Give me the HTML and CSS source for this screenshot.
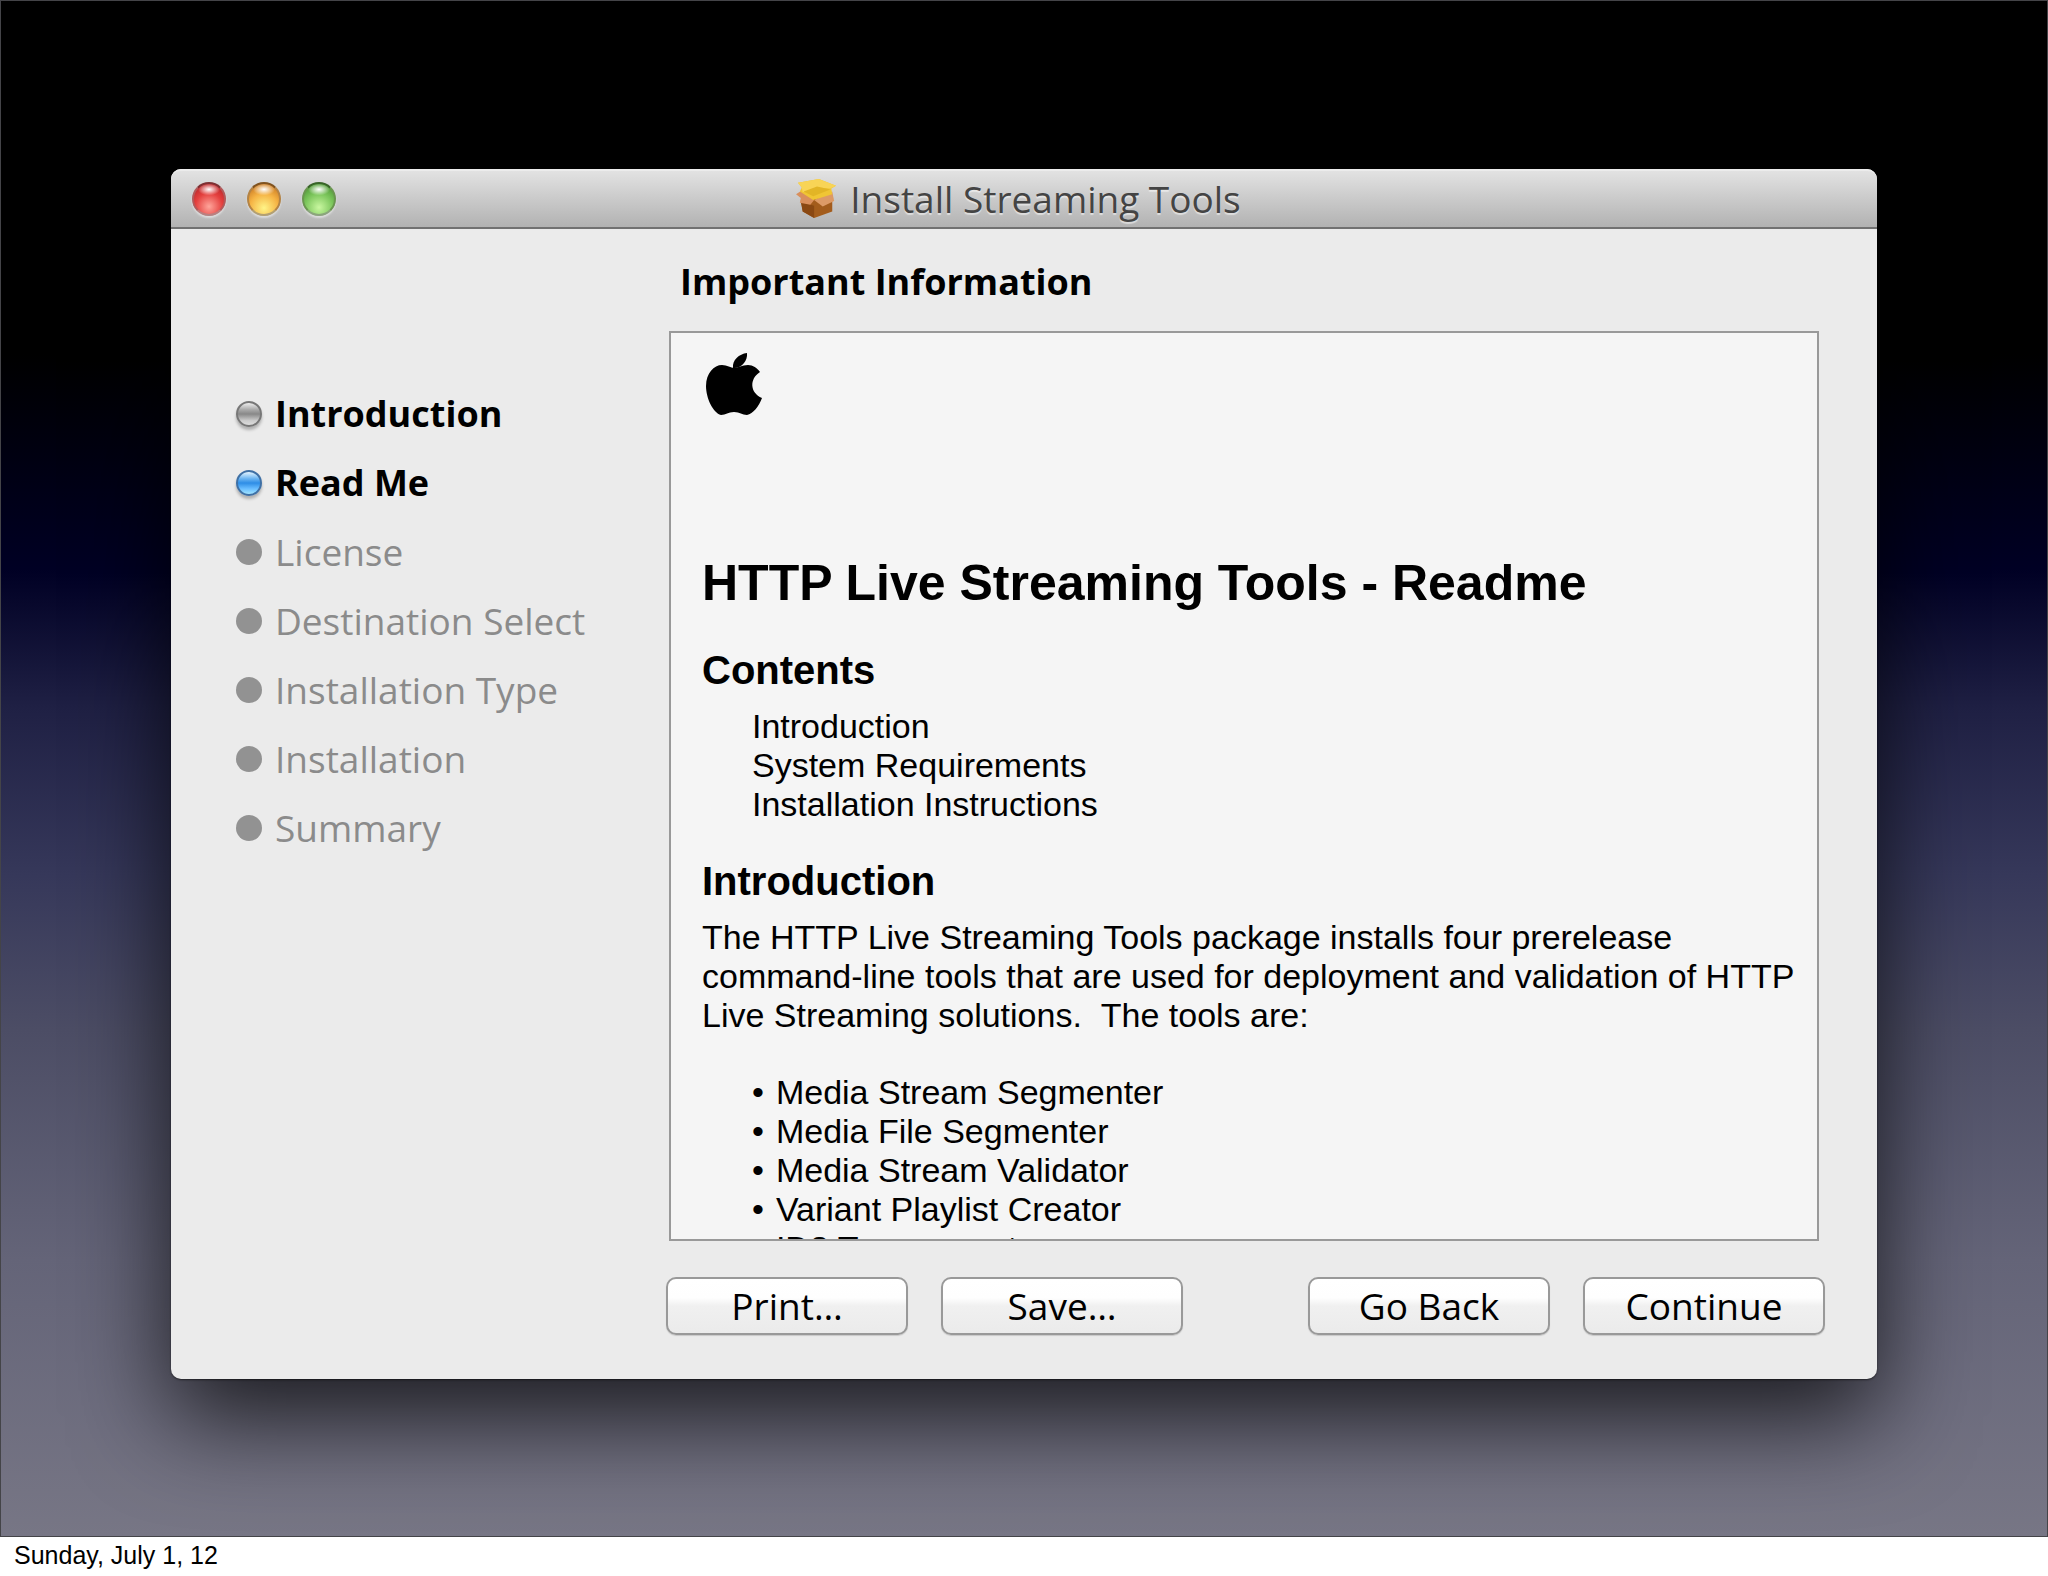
FILE: index.html
```html
<!DOCTYPE html>
<html lang="en">
<head>
    <meta charset="utf-8" />
    <meta content="width=device-width, initial-scale=1.0" name="viewport" />
    <title>Install Streaming Tools</title>
    <link rel="stylesheet" href="styles.css">
</head>
<body>
    <main class="slide">
        <div class="window">
            <header class="titlebar">
                <div class="traffic-lights">
                    <button class="light red" aria-label="Close"></button>
                    <button class="light yellow" aria-label="Minimize"></button>
                    <button class="light green" aria-label="Zoom"></button>
                </div>
                <h1 class="window-title">
                    <svg class="package-icon" viewBox="0 0 44 42" aria-hidden="true">
                        <path d="M5 22 L20 20 L38 22 L38 34 L19 41 L7 34 Z" fill="#a35c1c" />
                        <path d="M5 24 L19 28 L19 41 L7 34 Z" fill="#8a4812" />
                        <path d="M0 16 L6 12 L19 22 L15 27 L4 25 L5 20 Z" fill="#d98f5c" />
                        <path d="M19 22 L38 13 L40 23 L28 29 Z" fill="#dd9a66" />
                        <path d="M2 4 L24 0 L42 7 L37 10 L38 16 L18 22 L4 13 L6 9 Z" fill="#f0c534" />
                        <path d="M2 4 L24 0 L42 7 L36 10 L22 9 L7 14 L6 9 Z" fill="#f8d456" />
                        <path d="M8 13 L22 8 L36 11 L18 18 Z" fill="#e2b526" />
                    </svg>
                    <span>Install Streaming Tools</span>
                </h1>
            </header>

            <div class="content">
                <ol class="steps">
                    <li class="step done">Introduction</li>
                    <li class="step current" aria-current="step">Read Me</li>
                    <li class="step">License</li>
                    <li class="step">Destination Select</li>
                    <li class="step">Installation Type</li>
                    <li class="step">Installation</li>
                    <li class="step">Summary</li>
                </ol>

                <section class="pane">
                    <h2 class="pane-title">Important Information</h2>
                    <article class="readme">
                        <svg class="apple-logo" viewBox="0 0 56 62" role="img" aria-label="Apple">
                            <path d="M41 0 C42 8 35 16 27 15 C26 7 33 1 41 0 Z" />
                            <path d="M28 15 C32 15 36 12 42 12 C47 12 51 15 54 19 C43 26 44 40 56 45 C53 53 47 61 41 62 C36 62 34 59 28 59 C22 59 20 62 15 62 C7 60 0 45 0 33 C0 20 8 12 16 12 C21 12 25 15 28 15 Z" />
                        </svg>
                        <h3 class="readme-title">HTTP Live Streaming Tools - Readme</h3>
                        <h4>Contents</h4>
                        <ul class="toc">
                            <li>Introduction</li>
                            <li>System Requirements</li>
                            <li>Installation Instructions</li>
                        </ul>
                        <h4>Introduction</h4>
                        <p>The HTTP Live Streaming Tools package installs four prerelease command-line tools that are used for deployment and validation of HTTP Live Streaming solutions. &nbsp;The tools are:</p>
                        <ul class="tools">
                            <li>Media Stream Segmenter</li>
                            <li>Media File Segmenter</li>
                            <li>Media Stream Validator</li>
                            <li>Variant Playlist Creator</li>
                            <li>ID3 Tag generator</li>
                        </ul>
                    </article>
                    <div class="actions">
                        <button class="btn">Print…</button>
                        <button class="btn">Save…</button>
                        <button class="btn btn-back">Go Back</button>
                        <button class="btn">Continue</button>
                    </div>
                </section>
            </div>
        </div>
    </main>
    <footer class="date">Sunday, July 1, 12</footer>
</body>
</html>
```

FILE: styles.css
```css
*,
*::before {
    box-sizing: border-box;
}

body {
    margin: 0;
    min-height: 100vh;
    display: flex;
    flex-direction: column;
    background: #fff;
    color: #000;
    font-family: "Liberation Sans", Arial, sans-serif;
}

h1, h2, h3, h4, p, ul, ol {
    margin: 0;
    padding: 0;
}

ul, ol {
    list-style: none;
}

.slide {
    flex: 1;
    display: flex;
    flex-direction: column;
    padding: 168px 170px 157px;
    border: 1px solid #444448;
    background: linear-gradient(#000 0%, #000 23%, #000024 37%, #1f2044 46%, #36385a 57%, #4c4d65 67%, #646478 82%, #777685 100%);
}

.window {
    flex: 1;
    display: flex;
    flex-direction: column;
    border-radius: 10px;
    background: #ebebeb;
    box-shadow: 0 1px 2px rgba(0, 0, 0, 0.5), 0 38px 96px rgba(0, 0, 0, 0.75);
    font-family: "Open Sans", "Noto Sans", sans-serif;
}

/* Title bar */
.titlebar {
    display: grid;
    grid-template-columns: 1fr auto 1fr;
    align-items: center;
    height: 60px;
    padding: 0 32px 0 21px;
    border-top: 2px solid #ececec;
    border-bottom: 2px solid #717171;
    border-radius: 10px 10px 0 0;
    background: linear-gradient(#e2e2e2, #b2b2b2);
}

.traffic-lights {
    display: flex;
    gap: 21px;
}

.light {
    width: 34px;
    height: 34px;
    padding: 0;
    border: 2px solid;
    border-radius: 50%;
    box-shadow: 0 2px 2px rgba(255, 255, 255, 0.5);
}

.red {
    border-color: #7d3033 #b2595a #b98080;
    background: radial-gradient(11px 6px at 50% 18%, #fff 0%, rgba(255, 255, 255, 0) 100%), radial-gradient(circle at 50% 75%, #ffa59b 0%, #e4403e 50%, #a8191f 100%);
}

.yellow {
    border-color: #80531f #b38345 #b3a072;
    background: radial-gradient(11px 6px at 50% 18%, #fff 0%, rgba(255, 255, 255, 0) 100%), radial-gradient(circle at 50% 80%, #fff487 0%, #f5b344 50%, #b96416 100%);
}

.green {
    border-color: #386428 #6a964f #8ba57c;
    background: radial-gradient(11px 6px at 50% 18%, #fff 0%, rgba(255, 255, 255, 0) 100%), radial-gradient(circle at 50% 78%, #c9f7a0 0%, #7cc65c 50%, #3b8426 100%);
}

.window-title {
    display: flex;
    align-items: center;
    gap: 12px;
    color: #444;
    font-size: 37px;
    font-weight: 400;
    line-height: 48px;
    text-shadow: 0 2px 1px rgba(255, 255, 255, 0.5);
}

.package-icon {
    width: 42px;
    height: 40px;
}

/* Installer steps */
.content {
    flex: 1;
    display: grid;
    grid-template-columns: 443px 1fr;
    padding: 26px 52px 44px;
}

.steps {
    padding: 124px 0 0 13px;
}

.step {
    display: flex;
    align-items: center;
    gap: 13px;
    height: 69px;
    color: #8b8b8b;
    font-size: 37px;
    white-space: nowrap;
}

.step::before {
    content: "";
    width: 26px;
    height: 26px;
    border-radius: 50%;
    background: #929292;
}

.done,
.current {
    color: #000;
    font-size: 36px;
    font-weight: 700;
}

.done::before {
    border: 2px solid #777;
    background: linear-gradient(#eee 0%, #aaa 30%, #888 50%, #ccc 80%, #ddd 100%);
    box-shadow: 0 3px 3px rgba(0, 0, 0, 0.25);
}

.current::before {
    border: 2px solid #3f70a5;
    background: linear-gradient(#e4f5ff 0%, #6cb5f2 30%, #2e8de6 50%, #67bcff 75%, #a1e4ff 100%);
    box-shadow: 0 3px 3px rgba(0, 0, 0, 0.25);
}

.pane {
    display: flex;
    flex-direction: column;
}

.pane-title {
    padding-left: 14px;
    font-size: 36px;
    line-height: 54px;
}

/* Readme text, cut off at the bottom edge */
.readme {
    flex: 1 0 0;
    min-height: 0;
    margin: 22px 6px 36px 3px;
    padding: 20px 20px 0 31px;
    border: 2px solid #999;
    background: #f5f5f5;
    overflow: hidden;
    font-family: "Liberation Sans", Arial, sans-serif;
    font-size: 34px;
    line-height: 39px;
}

.apple-logo {
    display: block;
    width: 56px;
    height: 62px;
    margin: 0 0 138px 4px;
}

.readme-title {
    font-size: 50px;
    line-height: 60px;
    white-space: nowrap;
}

.readme h4 {
    margin: 35px 0 15px;
    font-size: 40px;
    line-height: 44px;
}

.toc {
    padding-left: 50px;
}

.tools {
    margin-top: 38px;
    padding-left: 50px;
}

.tools li {
    display: flex;
    gap: 12px;
}

.tools li::before {
    content: "•";
}

.actions {
    display: flex;
    gap: 33px;
}

.btn {
    width: 242px;
    height: 58px;
    padding: 0;
    border: 2px solid #999;
    border-radius: 10px;
    background: linear-gradient(#fff 0%, #fefefe 35%, #f0f0f0 50%, #ebebeb 100%);
    box-shadow: 0 1px 1px rgba(0, 0, 0, 0.15);
    color: #000;
    font-family: inherit;
    font-size: 37px;
    line-height: 50px;
}

.btn-back {
    margin-left: auto;
}

.date {
    height: 39px;
    padding-left: 14px;
    font-size: 25px;
    line-height: 36px;
}
```
